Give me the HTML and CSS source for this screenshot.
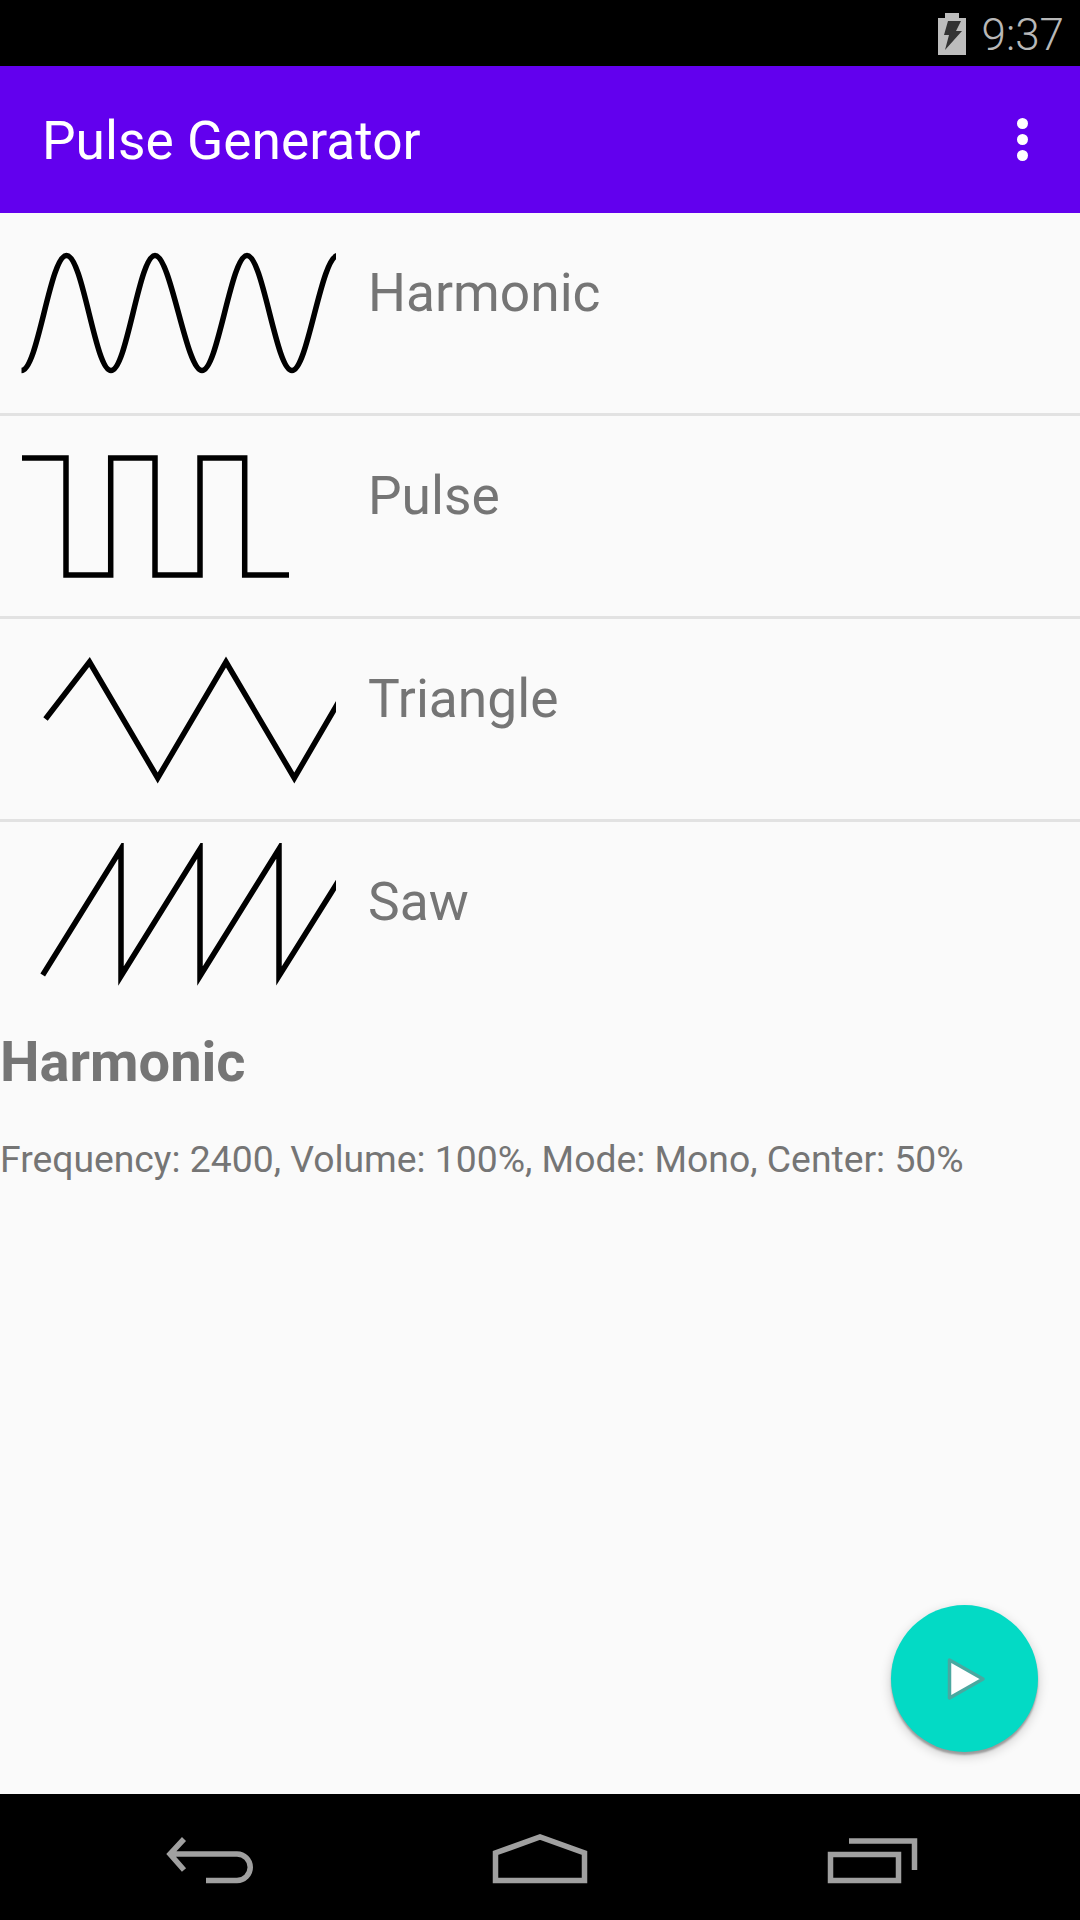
FILE: index.html
```html
<!DOCTYPE html>
<html lang="en">
<head>
	<meta charset="UTF-8">
	<title>Pulse Generator</title>
	<link rel="stylesheet" href="styles.css">
</head>
<body>
	<div class="status-bar">
		<svg class="battery" width="28" height="42" viewBox="0 0 28 42">
			<path fill="#bdbdbd" d="M7 0h14v5h7v37H0V5h7z"/>
			<path fill="#333" d="M10 8h13l-5 10h6L7 37l4-15H6z"/>
		</svg>
		<span class="clock">9:37</span>
	</div>
	<header class="app-bar">
		<span class="app-title">Pulse Generator</span>
		<div class="overflow"><i></i><i></i><i></i></div>
	</header>
	<main class="content">
		<ul class="wave-list">
			<li class="wave-row">
				<svg class="wave" viewBox="0 0 315 160">
					<path d="M0.5 136.5C17 136.5 29 21.5 45.5 21.5S74 136.5 90 136.5S118 21.5 134 21.5S165 136.5 181 136.5S210 21.5 226 21.5S255 136.5 271 136.5S300 21.5 317 21.5"/>
				</svg>
				<span class="wave-name">Harmonic</span>
			</li>
			<li class="wave-row">
				<svg class="wave" viewBox="0 0 315 160">
					<path d="M1 21H45V138H89.7V21H134V138H179V21H223.7V138H268"/>
				</svg>
				<span class="wave-name">Pulse</span>
			</li>
			<li class="wave-row">
				<svg class="wave" viewBox="0 0 315 160">
					<path d="M24.5 79L68.5 22L136.7 138L205 22L273.3 138L320 58"/>
				</svg>
				<span class="wave-name">Triangle</span>
			</li>
			<li class="wave-row">
				<svg class="wave" viewBox="0 0 315 160">
					<path d="M21.7 132L100 6V133L179 6V133L258 6V133L320 34"/>
				</svg>
				<span class="wave-name">Saw</span>
			</li>
		</ul>
		<h2 class="detail-title">Harmonic</h2>
		<p class="detail-text">Frequency: 2400, Volume: 100%, Mode: Mono, Center: 50%</p>
		<button class="fab">
			<svg width="46" height="50" viewBox="0 0 46 50">
				<path fill="#fff" stroke="#4aa8a0" stroke-width="3.5" stroke-linejoin="round" d="M7.5 6L41 25L7.5 44z"/>
			</svg>
		</button>
	</main>
	<nav class="nav-bar">
		<svg class="nav-icon" viewBox="0 0 120 80">
			<path d="M34 19L20 34L34 50M20 34H87A13.25 13.25 0 0 1 87 60.5H56"/>
		</svg>
		<svg class="nav-icon" viewBox="0 0 120 80">
			<path d="M15.5 60.5V33L60 17L104.5 33V60.5z"/>
		</svg>
		<svg class="nav-icon" viewBox="0 0 120 80">
			<path d="M20.5 34.5H88.5V60.5H20.5zM39 21H104.5V50"/>
		</svg>
	</nav>
</body>
</html>
```

FILE: styles.css
```css
html, body {
	height: 100%;
	margin: 0;
	padding: 0;
}
body {
	display: flex;
	flex-direction: column;
	font-family: Roboto, "Liberation Sans", sans-serif;
	background: #fafafa;
}
.status-bar {
	height: 66px;
	background: #000;
	display: flex;
	align-items: center;
	justify-content: flex-end;
	gap: 16px;
	padding-right: 16px;
}
.battery {
	margin-top: 2px;
}
.clock {
	color: #b8b8b8;
	font-size: 44px;
	font-weight: 300;
	padding-top: 4px;
}
.app-bar {
	height: 147px;
	background: #6200ee;
	display: flex;
	align-items: center;
	justify-content: space-between;
	padding: 0 52px 0 42px;
}
.app-title {
	color: #fff;
	font-size: 53.3px;
	padding-top: 2px;
}
.overflow {
	display: flex;
	flex-direction: column;
	gap: 5px;
}
.overflow i {
	display: block;
	width: 11px;
	height: 11px;
	border-radius: 50%;
	background: #fff;
}
.content {
	flex: 1;
	position: relative;
}
.wave-list {
	list-style: none;
	margin: 0;
	padding: 0;
}
.wave-row {
	height: 203px;
	box-sizing: border-box;
	padding: 21px 0 0 21px;
	display: flex;
	gap: 32px;
	border-bottom: 3px solid #e2e2e2;
}
.wave-row:last-child {
	border-bottom: 0;
	height: 200px;
}
.wave {
	width: 315px;
	height: 160px;
	flex: none;
}
.wave path {
	fill: none;
	stroke: #000;
	stroke-width: 5.5;
}
.wave-name {
	color: #757575;
	font-size: 53.3px;
	margin-top: 28px;
}
.detail-title {
	margin: 7px 0 0;
	color: #757575;
	font-size: 56px;
	font-weight: 700;
	line-height: 66px;
}
.detail-text {
	margin: 42px 0 0;
	color: #757575;
	font-size: 37.3px;
	line-height: 44px;
}
.fab {
	position: absolute;
	right: 42px;
	bottom: 42px;
	width: 147px;
	height: 147px;
	padding: 0;
	border: 0;
	border-radius: 50%;
	background: #03dac5;
	box-shadow: 0 3px 2px rgba(0,0,0,.28), 0 4px 12px rgba(0,0,0,.2);
	display: flex;
	align-items: center;
	justify-content: center;
}
.nav-bar {
	height: 126px;
	background: #000;
	display: flex;
	justify-content: space-between;
	align-items: flex-start;
	padding: 26px 150px 0;
	box-sizing: border-box;
}
.nav-icon {
	width: 120px;
	height: 80px;
}
.nav-icon path {
	fill: none;
	stroke: #a0a0a0;
	stroke-width: 5.5;
}
```
